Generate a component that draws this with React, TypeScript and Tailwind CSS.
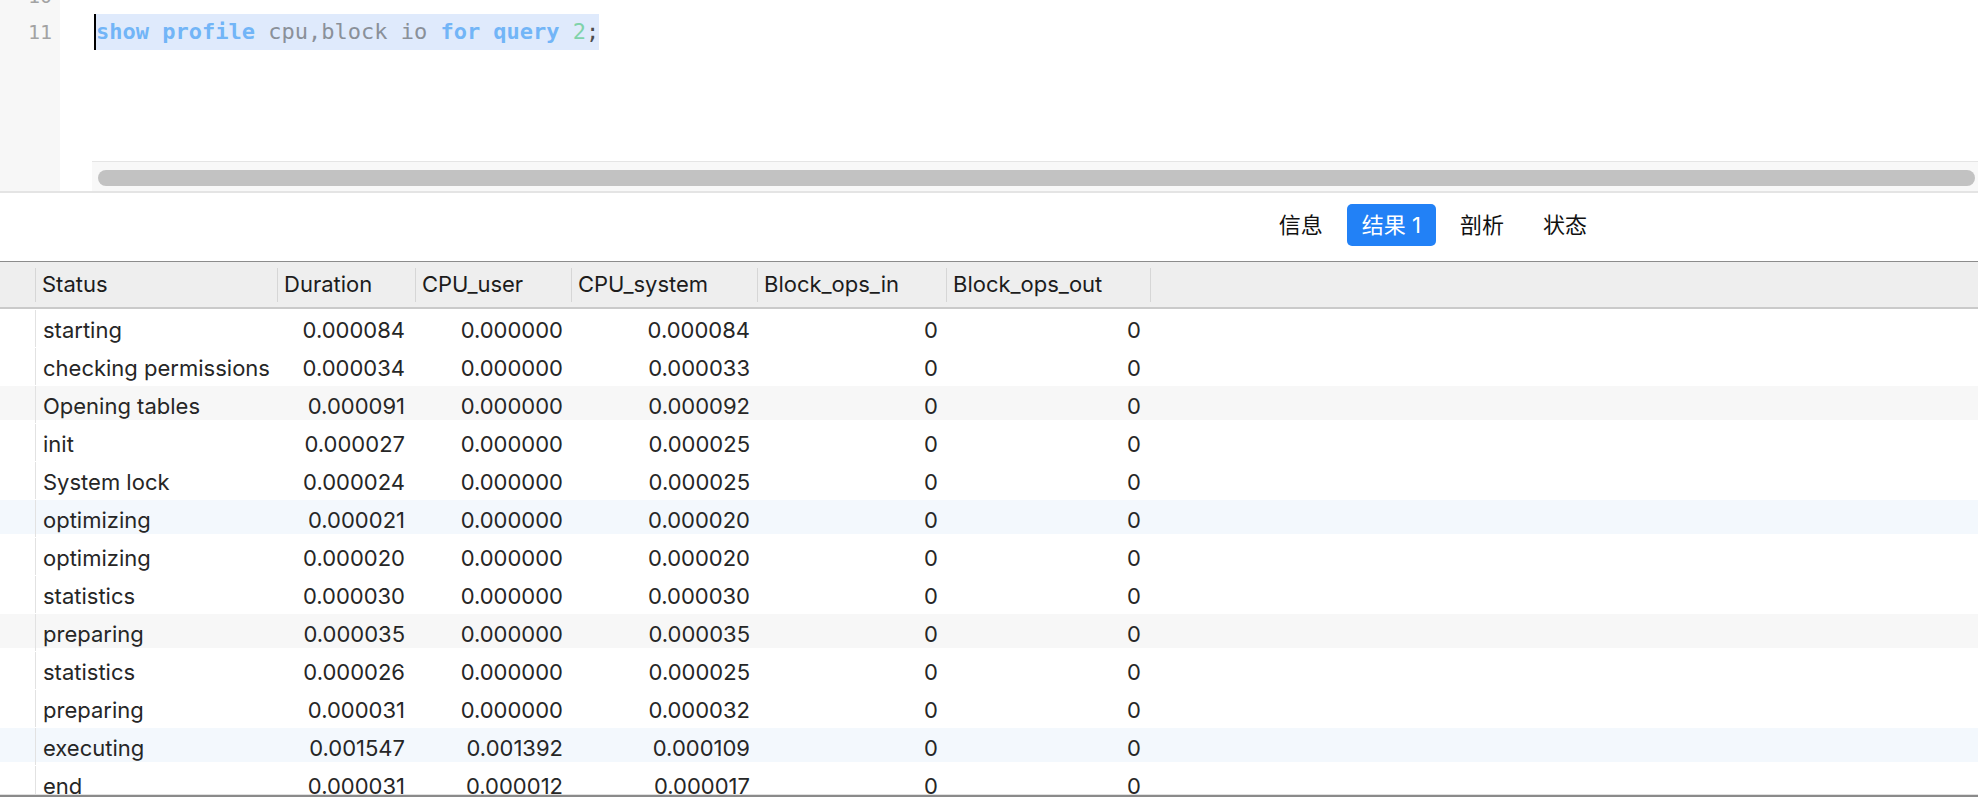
import React from "react";

const rows = [
  ["starting", "0.000084", "0.000000", "0.000084", "0", "0"],
  ["checking permissions", "0.000034", "0.000000", "0.000033", "0", "0"],
  ["Opening tables", "0.000091", "0.000000", "0.000092", "0", "0"],
  ["init", "0.000027", "0.000000", "0.000025", "0", "0"],
  ["System lock", "0.000024", "0.000000", "0.000025", "0", "0"],
  ["optimizing", "0.000021", "0.000000", "0.000020", "0", "0"],
  ["optimizing", "0.000020", "0.000000", "0.000020", "0", "0"],
  ["statistics", "0.000030", "0.000000", "0.000030", "0", "0"],
  ["preparing", "0.000035", "0.000000", "0.000035", "0", "0"],
  ["statistics", "0.000026", "0.000000", "0.000025", "0", "0"],
  ["preparing", "0.000031", "0.000000", "0.000032", "0", "0"],
  ["executing", "0.001547", "0.001392", "0.000109", "0", "0"],
  ["end", "0.000031", "0.000012", "0.000017", "0", "0"],
];

const headers = [
  { label: "Status", w: "w-[242px]" },
  { label: "Duration", w: "w-[138px]" },
  { label: "CPU_user", w: "w-[156px]" },
  { label: "CPU_system", w: "w-[186px]" },
  { label: "Block_ops_in", w: "w-[189px]" },
  { label: "Block_ops_out", w: "w-[204px]" },
];

// body cells: width + right padding for numbers
const cells = [
  "w-[240px] pl-[7px] text-left",
  "w-[138px] pr-[9px] text-right",
  "w-[156px] pr-[7px] text-right",
  "w-[186px] pr-[6px] text-right",
  "w-[189px] pr-[7px] text-right",
  "w-[204px] pr-[8px] text-right",
];

function stripe(i: number) {
  if (i % 6 === 2) return "bg-[#f7f7f7]";
  if (i % 6 === 5) return "bg-[#f3f8fd]";
  return "bg-white";
}

export default function App() {
  const tabs = ["信息", "结果 1", "剖析", "状态"];

  return (
    <div className="w-[1978px] h-[808px] bg-white overflow-hidden flex flex-col font-['Inter','Noto_Sans_CJK_SC',sans-serif]">
      {/* editor */}
      <div className="h-[191px] flex shrink-0">
        <div className="w-[60px] bg-[#f7f7f7] overflow-hidden font-['DejaVu_Sans_Mono',monospace] text-[20px] text-[#a3a3a3]">
          <div className="mt-[-22px]">
            <div className="h-[36px] leading-[36px] text-right pr-[8px]">10</div>
            <div className="h-[36px] leading-[36px] text-right pr-[8px]">11</div>
          </div>
        </div>
        <div className="flex-1 flex flex-col">
          <div className="h-[161px] overflow-hidden font-['DejaVu_Sans_Mono',monospace] text-[22px]">
            <div className="mt-[-22px]">
              <div className="h-[36px]" />
              <div className="h-[36px] pl-[34px] flex">
                <span className="h-[36px] leading-[36px] border-l-2 border-black bg-[#dfeafc] whitespace-pre">
                  <span className="font-bold text-[#72b5f7]">show profile</span>
                  <span className="text-[#8a9099]"> cpu,block io </span>
                  <span className="font-bold text-[#72b5f7]">for query</span>
                  <span className="text-[#7fd3aa]"> 2</span>
                  <span className="text-[#4d4d4d]">;</span>
                </span>
              </div>
            </div>
          </div>
          <div className="h-[30px] ml-[32px] border-t border-[#e5e5e5] bg-[#f8f8f8] pt-[8px] pl-[6px] pr-[3px]">
            <div className="h-[16px] rounded-full bg-[#c2c2c2]" />
          </div>
        </div>
      </div>
      <div className="h-[2px] bg-[#e4e4e4] shrink-0" />

      {/* tabs */}
      <div className="h-[68px] shrink-0 flex justify-end items-start pt-[11px] pr-[376px] gap-[9px]">
        {tabs.map((t, i) => (
          <div
            key={t}
            className={
              i === 1
                ? "h-[42px] px-[15px] flex items-center rounded-[5px] bg-[#2281f6] text-white text-[22px]"
                : "h-[42px] px-[15px] flex items-center rounded-[5px] text-[#111] text-[22px]"
            }
          >
            {t}
          </div>
        ))}
      </div>

      {/* header */}
      <div className="h-[48px] shrink-0 flex border-t border-[#8c8c8c] border-b-2 border-b-[#cacaca] bg-[#eeeeee] text-[22px] text-[#1c1c1c]">
        <div className="w-[35px]" />
        {headers.map((h) => (
          <div key={h.label} className={`${h.w} flex items-center`}>
            <div className="w-px h-[34px] bg-[#d6d6d6]" />
            <span className="pl-[6px]">{h.label}</span>
          </div>
        ))}
        <div className="flex-1 flex items-center">
          <div className="w-px h-[34px] bg-[#d6d6d6]" />
        </div>
      </div>

      {/* body */}
      <div className="h-[485px] shrink-0 overflow-hidden text-[22px] text-[#262626]">
        {rows.map((r, i) => (
          <div key={i} className="h-[38px] pt-px">
            <div className={`h-[34px] flex ${stripe(i)}`}>
              <div className="w-[36px] h-full border-r border-[#e2e2e2] shrink-0" />
              {r.map((c, j) => (
                <div key={j} className={`${cells[j]} shrink-0 h-[34px] leading-[40px] whitespace-nowrap`}>
                  {c}
                </div>
              ))}
            </div>
            <div className="h-[3px] flex">
              <div className="w-[36px] h-full border-r border-[#e2e2e2]" />
            </div>
          </div>
        ))}
      </div>
      <div className="h-px bg-[#e0e0e0] shrink-0" />
      <div className="h-[2px] bg-[#8a8a8a] shrink-0" />
    </div>
  );
}
